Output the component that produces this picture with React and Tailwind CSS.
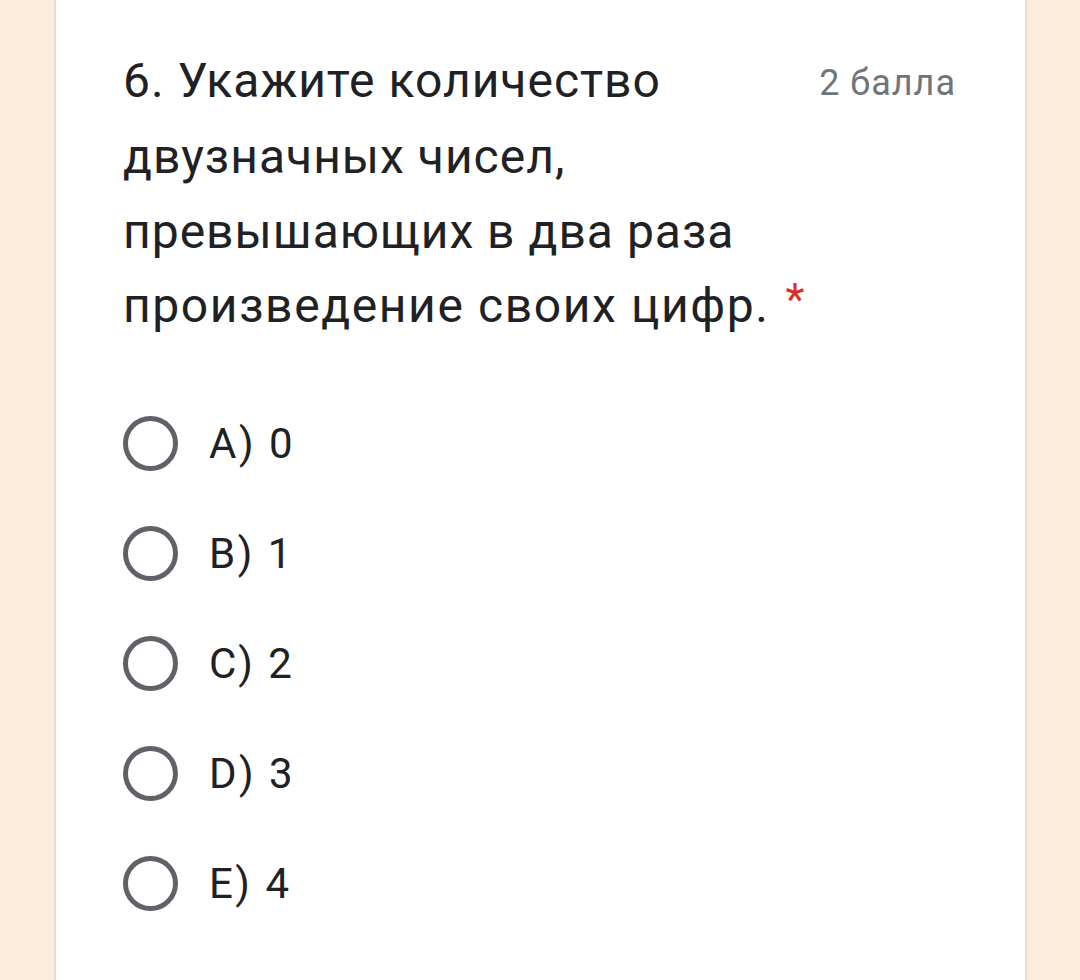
import React from "react";

const options = ["A) 0", "B) 1", "C) 2", "D) 3", "E) 4"];

export default function App() {
  return (
    <div className="w-[1080px] h-[980px] overflow-hidden bg-[#fbecdb] flex justify-start" style={{ fontFamily: "Roboto, 'Noto Sans', sans-serif" }}>
      <div className="ml-[54px] w-[973px] h-[1000px] bg-white border-x-2 border-[#e3ddd5] pl-[67px] pr-[69px] pt-[44px]">
        <div className="text-[48px] leading-[74.5px] text-[#202124] tracking-[1px]">
          <div className="flex justify-between items-start">
            <span>6. Укажите количество</span>
            <span className="text-[36px] leading-[74px] text-[#70757a] tracking-[1px] mt-[2px]">2 балла</span>
          </div>
          <div>двузначных чисел,</div>
          <div>превышающих в два раза</div>
          <div>
            <span className="tracking-[1.6px]">произведение своих цифр.</span>
            <span className="text-[#d93025] text-[44px] ml-[16px] relative -top-[7px]">*</span>
          </div>
        </div>
        <div className="mt-[44px] flex flex-col">
          {options.map((o) => (
            <div key={o} className="h-[110px] flex items-center gap-[31px]">
              <div className="w-[55px] h-[55px] rounded-full border-[5px] border-[#5f6368] shrink-0" />
              <span className="text-[42px] text-[#202124] tracking-[2.5px]">{o}</span>
            </div>
          ))}
        </div>
      </div>
    </div>
  );
}
